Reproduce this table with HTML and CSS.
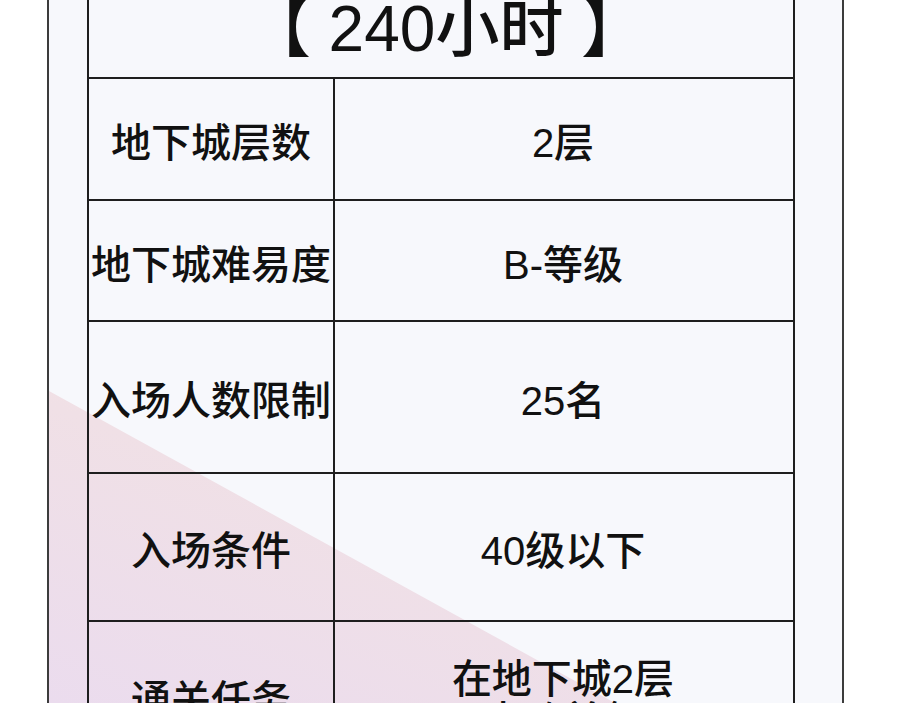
FILE: index.html
```html
<!DOCTYPE html>
<html lang="zh-CN">
<head>
<meta charset="utf-8">
<title>地下城信息</title>
<link rel="stylesheet" href="styles.css">
</head>
<body>
<div class="panel">
  <div class="info">
    <div class="cell title">【 240小时 】</div>
    <div class="cell key r1">地下城层数</div>
    <div class="cell val r1">2层</div>
    <div class="cell key r2">地下城难易度</div>
    <div class="cell val r2">B-等级</div>
    <div class="cell key r3">入场人数限制</div>
    <div class="cell val r3">25名</div>
    <div class="cell key r4">入场条件</div>
    <div class="cell val r4">40级以下</div>
    <div class="cell key r5">通关任务</div>
    <div class="cell val r5 multi">在地下城2层<br>击败首领</div>
  </div>
</div>
</body>
</html>
```
FILE: styles.css
```css
html, body {
  margin: 0;
  padding: 0;
  background: #ffffff;
}
body {
  font-family: "Liberation Sans", "Noto Sans CJK SC", sans-serif;
  color: #111111;
}
.panel {
  position: relative;
  box-sizing: border-box;
  margin-left: 47px;
  width: 797px;
  height: 703px;
  overflow: hidden;
  background: #f7f8fc;
  border-left: 2px solid #3c3c3c;
  border-right: 2px solid #3c3c3c;
}
.panel::before {
  content: "";
  position: absolute;
  left: 0;
  top: 0;
  width: 100%;
  height: 100%;
  background: linear-gradient(200deg, #f6e4e2 45%, #f0e0e6 70%, #ebdcee 100%);
  clip-path: polygon(0 391px, 566px 703px, 0 703px);
}
.info {
  position: relative;
  margin-left: 38px;
  width: 708px;
  box-sizing: border-box;
  display: grid;
  grid-template-columns: 246px 460px;
  border-left: 2px solid #1e1e1e;
  border-right: 2px solid #1e1e1e;
}
.cell {
  box-sizing: border-box;
  display: flex;
  align-items: center;
  justify-content: center;
  text-align: center;
  border-bottom: 2px solid #1e1e1e;
  font-size: 40px;
  font-weight: 500;
  line-height: 1.2;
  padding-top: 8px;
}
.key {
  border-right: 2px solid #1e1e1e;
}
.val {
  padding-right: 4px;
}
.title {
  grid-column: 1 / span 2;
  height: 79px;
  font-size: 64px;
  font-weight: 500;
  padding-top: 0;
  padding-bottom: 18px;
  padding-left: 8px;
  white-space: pre;
}
.r1 { height: 122px; }
.r2 { height: 121px; }
.r3 { height: 152px; }
.r4 { height: 148px; }
.r5 { height: 150px; }
.multi {
  line-height: 1.05;
}
```
